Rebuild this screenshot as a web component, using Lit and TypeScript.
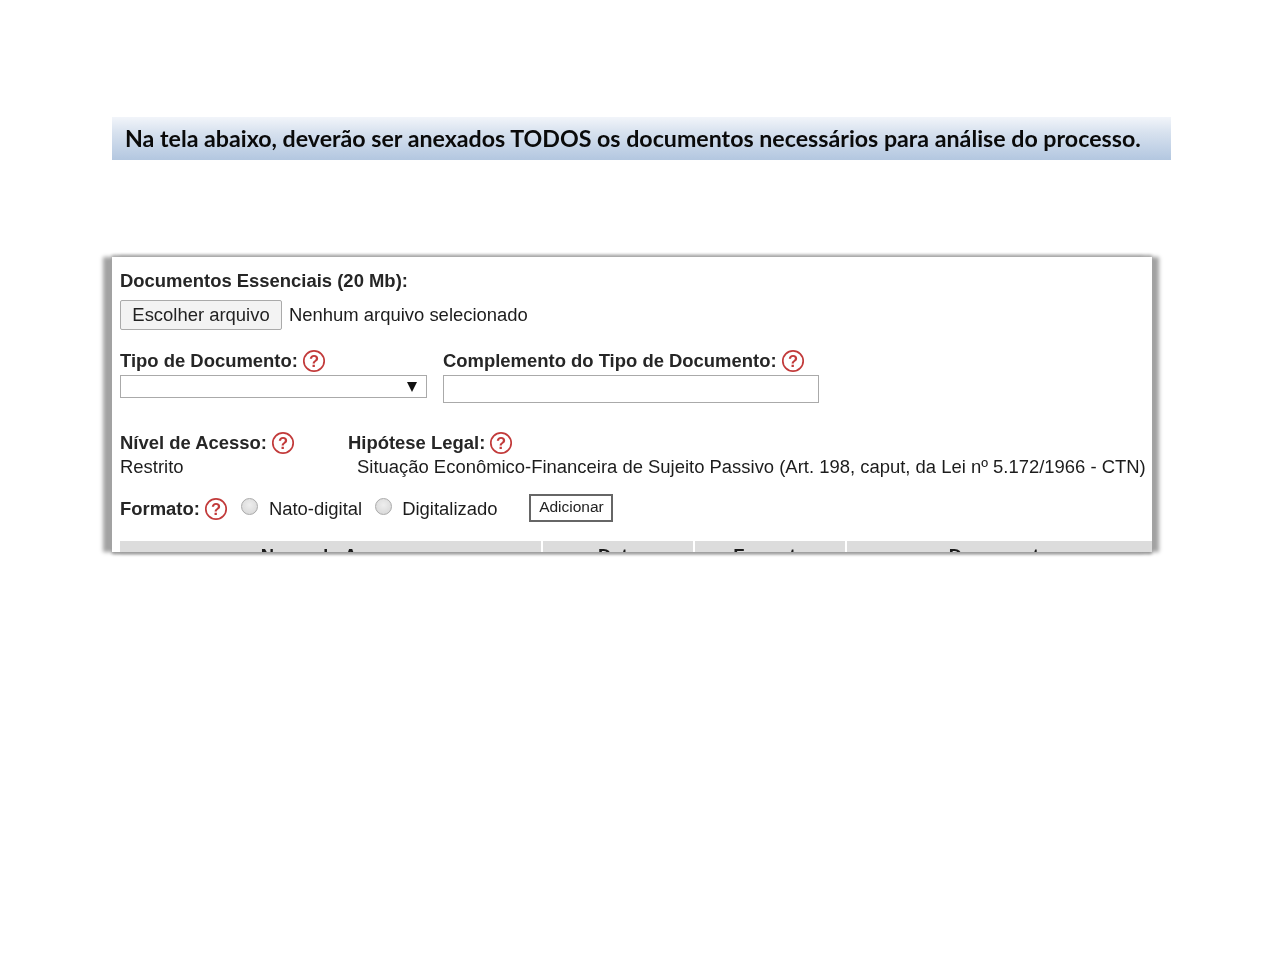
import { LitElement, html, css, svg } from "lit";
import { customElement } from "lit/decorators.js";

const help = svg`<svg class="help" width="24" height="24" viewBox="0 0 24 24" aria-hidden="true"><circle cx="12" cy="12" r="10.2" fill="#fff" stroke="#c23a3a" stroke-width="1.7"/><text x="12" y="18" text-anchor="middle" font-family="Liberation Sans, sans-serif" font-weight="700" font-size="16.5" fill="#c23a3a">?</text></svg>`;

@customElement("app-root")
export class AppRoot extends LitElement {
  static styles = css`
    :host { display: block; width: 1280px; height: 960px; background: #fff; overflow: hidden; font-family: "Liberation Sans", Arial, sans-serif; color: #1c1c1c; }
    .page { padding: 117px 109px 0 112px; display: flex; flex-direction: column; }
    .banner { height: 43px; box-sizing: border-box; padding: 0 0 2px 13px; display: flex; align-items: center; background: linear-gradient(180deg, #f2f5fa 0%, #d8e2ef 35%, #b3c7e0 100%); font-family: Lato, sans-serif; font-weight: 700; font-size: 23.2px; color: #0a0a0a; white-space: nowrap; filter: blur(0.4px); }
    .panel { margin: 97px 0 0 0; width: 1040px; height: 295px; box-sizing: border-box; background: #fff; box-shadow: -9px 0 4px #a2a2a2, 7px 0 4px #a2a2a2, 0 -2px 3px #b4b4b4, 0 2px 3px #8f8f8f; padding: 13px 0 0 8px; overflow: hidden; font-size: 18.45px; line-height: 22px; filter: blur(0.45px); display: flex; flex-direction: column; }
    .title { height: 22px; }
    .file { display: flex; align-items: center; gap: 7px; margin-top: 8px; height: 30px; }
    .choose { width: 162px; height: 30px; box-sizing: border-box; border: 1px solid #aaa; border-radius: 2px; background: #f3f3f3; font: inherit; color: #222; padding: 0; }
    .row { display: flex; }
    .label { display: flex; align-items: center; gap: 4px; height: 24px; font-weight: 700; color: #262626; white-space: nowrap; }
    .types { margin-top: 19px; gap: 16px; }
    .col { display: flex; flex-direction: column; }
    .select { width: 307px; height: 23px; box-sizing: border-box; border: 1px solid #aaa; margin-top: 2px; display: flex; align-items: center; justify-content: flex-end; padding-right: 10px; }
    .arrow { width: 0; height: 0; border-left: 5px solid transparent; border-right: 5px solid transparent; border-top: 10px solid #111; margin-right: -1px; }
    .input { width: 376px; height: 28px; box-sizing: border-box; border: 1.5px solid #aaa; margin-top: 2px; }
    .access { margin-top: 28px; }
    .c1 { width: 228px; }
    .value { height: 24px; line-height: 24px; white-space: nowrap; }
    .indent { padding-left: 9px; }
    .format { display: flex; align-items: center; margin-top: 17px; height: 30px; }
    .radio { width: 17px; height: 17px; border-radius: 50%; box-sizing: border-box; border: 1px solid #aaa; background: radial-gradient(circle at 50% 40%, #eee, #d4d4d4); margin-top: -6px; }
    .r1 { margin-left: 13px; }
    .r2 { margin-left: 13px; }
    .rt { margin-left: 11px; }
    .r2 + .rt { margin-left: 10px; }
    .add { margin: -2px 0 0 32px; width: 84px; height: 28px; box-sizing: border-box; border: 2px solid #666; background: #fff; font: 15.5px "Liberation Sans", sans-serif; padding: 0 0 2px; color: #222; }
    .head { display: grid; grid-template-columns: 421px 150px 150px 1fr; gap: 2px; margin-top: 19px; height: 30px; flex: none; }
    .head div { background: #dcdcdc; text-align: center; font-weight: 700; padding-top: 4px; box-sizing: border-box; }
  `;
  render() {
    return html`<div class="page">
      <div class="banner">Na tela abaixo, deverão ser anexados TODOS os documentos necessários para análise do processo.</div>
      <div class="panel">
        <div class="title label">Documentos Essenciais (20 Mb):</div>
        <div class="file"><button class="choose">Escolher arquivo</button><span>Nenhum arquivo selecionado</span></div>
        <div class="row types">
          <div class="col"><div class="label">Tipo de Documento: ${help}</div><div class="select"><span class="arrow"></span></div></div>
          <div class="col"><div class="label">Complemento do Tipo de Documento: ${help}</div><div class="input"></div></div>
        </div>
        <div class="row access">
          <div class="col c1"><div class="label">Nível de Acesso: ${help}</div><div class="value">Restrito</div></div>
          <div class="col"><div class="label">Hipótese Legal: ${help}</div><div class="value indent">Situação Econômico-Financeira de Sujeito Passivo (Art. 198, caput, da Lei nº 5.172/1966 - CTN)</div></div>
        </div>
        <div class="format">
          <div class="label">Formato: ${help}</div>
          <span class="radio r1"></span><span class="rt">Nato-digital</span>
          <span class="radio r2"></span><span class="rt">Digitalizado</span>
          <button class="add">Adicionar</button>
        </div>
        <div class="head"><div>Nome do Anexo</div><div>Data</div><div>Formato</div><div>Documento</div></div>
      </div>
    </div>`;
  }
}
